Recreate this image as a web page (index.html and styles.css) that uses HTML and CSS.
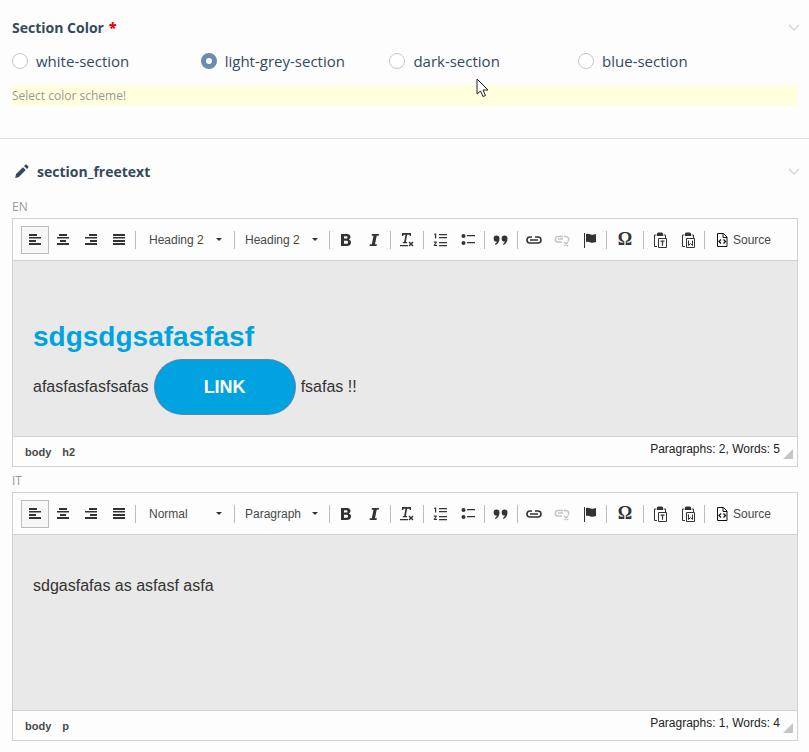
FILE: index.html
```html
<!DOCTYPE html>
<html>
  <head>
    <title>Section editor</title>
    <link rel="stylesheet" href="styles.css">
  </head>
  <body>
    <!-- shared toolbar icons -->
    <svg class="sprites" width="0" height="0">
      <symbol id="i-left" viewBox="0 0 16 16"><path d="M2 2h8v2H2zM2 5h12v1.500H2zM2 8h7v2H2zM2 11h12v2H2z"/></symbol>
      <symbol id="i-center" viewBox="0 0 16 16"><path d="M4 2h8v2H4zM2 5h12v1.500H2zM5 8h6v2H5zM2 11h12v2H2z"/></symbol>
      <symbol id="i-right" viewBox="0 0 16 16"><path d="M6 2h8v2H6zM2 5h12v1.500H2zM7 8h7v2H7zM2 11h12v2H2z"/></symbol>
      <symbol id="i-justify" viewBox="0 0 16 16"><path d="M2 2h12v2H2zM2 5h12v1.500H2zM2 8h12v2H2zM2 11h12v2H2z"/></symbol>
      <symbol id="i-bold" viewBox="0 0 16 16"><path fill-rule="evenodd" d="M3 2h5.500c2.500 0 4 1 4 3 0 1.200-.7 2-1.700 2.500 1.300.4 2.200 1.400 2.200 2.900 0 2.300-1.800 3.600-4.500 3.600H3zm3 2.200v2.400h2c1 0 1.500-.4 1.500-1.200S9 4.200 8 4.200zm0 4.500v3.100h2.300c1.100 0 1.700-.5 1.700-1.600s-.6-1.500-1.700-1.500z"/></symbol>
      <symbol id="i-italic" viewBox="0 0 16 16"><path d="M6 2h7l-.4 1.800h-1.900L9 12.200h1.900l-.4 1.800h-7l.4-1.800h1.900l1.700-8.400H5.600z"/></symbol>
      <symbol id="i-clear" viewBox="0 0 16 16"><path d="M3 1h9v3h-1.200l-.3-1.300H8.200L6.800 10h1.300v1.300H3.800V10h1.300l1.400-7.300H4.700L4.200 4H3zM1 13h8v1.200H1zM10.500 9.500l1.500 1.500 1.500-1.500 1 1-1.500 1.500 1.500 1.500-1 1-1.500-1.500-1.500 1.500-1-1 1.500-1.500-1.500-1.500z"/></symbol>
      <symbol id="i-ol" viewBox="0 0 16 16"><path d="M7 2h8v1.300H7zM7 5h8v1.300H7zM7 10h8v1.300H7zM7 13h8v1.300H7zM3 1.500h1.200v5H3V2.800H2v-.7zM1.800 9.500h3v1.100L3.200 12.800h1.800V14H1.800v-1l1.700-2.300H1.800z"/></symbol>
      <symbol id="i-ul" viewBox="0 0 16 16"><circle cx="3.500" cy="4" r="2"/><circle cx="3.500" cy="11" r="2"/><path d="M7 3h8v1.300H7zM7 10h8v1.300H7z"/></symbol>
      <symbol id="i-quote" viewBox="0 0 16 16"><path d="M3.500 3.500a3 3 0 0 1 3 3c0 3-1.500 5.500-4 6.500l-.6-1c1-.6 1.700-1.500 1.900-2.500a3 3 0 0 1-.3-6zM11.500 3.500a3 3 0 0 1 3 3c0 3-1.500 5.500-4 6.500l-.6-1c1-.6 1.700-1.500 1.900-2.500a3 3 0 0 1-.3-6z"/></symbol>
      <symbol id="i-link" viewBox="0 0 16 16"><path fill="none" stroke="currentColor" stroke-width="1.600" d="M6 5H4a3 3 0 0 0 0 6h8a3 3 0 0 0 0-6H9M4 8h8"/></symbol>
      <symbol id="i-unlink" viewBox="0 0 16 16"><path fill="none" stroke="currentColor" stroke-width="1.500" d="M9 4.500H4a2.700 2.700 0 0 0 0 5.500h4M10 4.500h2a2.700 2.700 0 0 1 2 4.500M4 7h5M10 10l4 4M14 10l-4 4"/></symbol>
      <symbol id="i-flag" viewBox="0 0 16 16"><path d="M2 1h1v15H2zM4 2c3-1 4 .8 6.500.8 1.300 0 2.500-.3 3.500-.8v8c-1 .6-2.200.8-3.500.8C8 10.800 7 9 4 10z"/></symbol>
      <symbol id="i-paste-t" viewBox="0 0 16 16"><path fill="none" stroke="currentColor" d="M4.500 3H2.500v11.500H5M11.500 3h2v3"/><path d="M5 1.500a1.500 1.500 0 0 1 1.500-1h3a1.500 1.500 0 0 1 1.500 1V4H5z"/><path fill="none" stroke="currentColor" d="M6.500 6.500h8v9h-8z"/><path d="M8.500 8.500h4v1.200h-1.400v4H9.900v-4H8.500z"/></symbol>
      <symbol id="i-paste-w" viewBox="0 0 16 16"><path fill="none" stroke="currentColor" d="M4.500 3H2.500v11.500H5M11.500 3h2v3"/><path d="M5 1.500a1.500 1.500 0 0 1 1.500-1h3a1.500 1.500 0 0 1 1.500 1V4H5z"/><path fill="none" stroke="currentColor" d="M6.500 6.500h8v9h-8z"/><path fill="none" stroke="currentColor" d="M8.500 8.500v5l2-2 2 2v-5"/></symbol>
      <symbol id="i-source" viewBox="0 0 16 16"><path fill="none" stroke="#111" d="M3.500 1.500h6l3.500 3.500v9.500H3.500z"/><path d="M9 1.500V5.500h4" fill="none" stroke="#111"/><path fill="none" stroke="#111" stroke-width="1.300" d="M7 7.500 5 9.500l2 2M9.500 7.500l2 2-2 2"/></symbol>
    </svg>

    <!-- Section color -->
    <section class="section color-section">
      <div class="section-head">
        <span class="section-title">Section Color <b class="required">*</b></span>
        <svg class="chevron" width="12" height="7" viewBox="0 0 12 7"><path d="M1 1l5 5 5-5" fill="none" stroke="#c9cfdb" stroke-width="1.200"/></svg>
      </div>
      <div class="radio-row">
        <label class="radio-item"><span class="radio"></span>white-section</label>
        <label class="radio-item"><span class="radio checked"></span>light-grey-section</label>
        <label class="radio-item"><span class="radio"></span>dark-section</label>
        <label class="radio-item"><span class="radio"></span>blue-section</label>
      </div>
      <div class="hint">Select color scheme!</div>
    </section>

    <!-- Free text -->
    <section class="section">
      <div class="section-head freetext-head">
        <span class="section-title">
          <svg class="pencil" width="14" height="14" viewBox="0 0 14 14"><path d="M10.300.8a1 1 0 0 1 1.400 0l1.500 1.500a1 1 0 0 1 0 1.400l-1.300 1.300-2.900-2.900zM7.900 3.200l2.900 2.900-6.900 6.900-3.700.9.900-3.800z" fill="#34495e"/></svg>
          section_freetext
        </span>
        <svg class="chevron" width="12" height="7" viewBox="0 0 12 7"><path d="M1 1l5 5 5-5" fill="none" stroke="#c9cfdb" stroke-width="1.200"/></svg>
      </div>

      <div class="lang">EN</div>
      <div class="editor">
        <div class="toolbar">
          <span class="btn on"><svg><use href="#i-left"/></svg></span>
          <span class="btn"><svg><use href="#i-center"/></svg></span>
          <span class="btn"><svg><use href="#i-right"/></svg></span>
          <span class="btn"><svg><use href="#i-justify"/></svg></span>
          <span class="sep"></span>
          <span class="combo combo-first">Heading 2<i class="caret"></i></span>
          <span class="sep"></span>
          <span class="combo combo-second">Heading 2<i class="caret"></i></span>
          <span class="sep"></span>
          <span class="btn"><svg><use href="#i-bold"/></svg></span>
          <span class="btn"><svg><use href="#i-italic"/></svg></span>
          <span class="sep"></span>
          <span class="btn"><svg><use href="#i-clear"/></svg></span>
          <span class="sep"></span>
          <span class="btn"><svg><use href="#i-ol"/></svg></span>
          <span class="btn"><svg><use href="#i-ul"/></svg></span>
          <span class="sep"></span>
          <span class="btn"><svg><use href="#i-quote"/></svg></span>
          <span class="sep"></span>
          <span class="btn"><svg><use href="#i-link"/></svg></span>
          <span class="btn off"><svg><use href="#i-unlink"/></svg></span>
          <span class="btn"><svg><use href="#i-flag"/></svg></span>
          <span class="sep"></span>
          <span class="btn omega">Ω</span>
          <span class="sep"></span>
          <span class="btn"><svg><use href="#i-paste-t"/></svg></span>
          <span class="btn"><svg><use href="#i-paste-w"/></svg></span>
          <span class="sep"></span>
          <span class="source"><svg><use href="#i-source"/></svg>Source</span>
        </div>
        <div class="content">
          <h2>sdgsdgsafasfasf</h2>
          <p>afasfasfasfsafas <a class="link-btn">LINK</a> fsafas !!</p>
        </div>
        <div class="statusbar">
          <span class="path"><b>body</b><b>h2</b></span>
          <span class="count">Paragraphs: 2, Words: 5</span>
          <i class="grip"></i>
        </div>
      </div>

      <div class="lang">IT</div>
      <div class="editor">
        <div class="toolbar">
          <span class="btn on"><svg><use href="#i-left"/></svg></span>
          <span class="btn"><svg><use href="#i-center"/></svg></span>
          <span class="btn"><svg><use href="#i-right"/></svg></span>
          <span class="btn"><svg><use href="#i-justify"/></svg></span>
          <span class="sep"></span>
          <span class="combo combo-first">Normal<i class="caret"></i></span>
          <span class="sep"></span>
          <span class="combo combo-second">Paragraph<i class="caret"></i></span>
          <span class="sep"></span>
          <span class="btn"><svg><use href="#i-bold"/></svg></span>
          <span class="btn"><svg><use href="#i-italic"/></svg></span>
          <span class="sep"></span>
          <span class="btn"><svg><use href="#i-clear"/></svg></span>
          <span class="sep"></span>
          <span class="btn"><svg><use href="#i-ol"/></svg></span>
          <span class="btn"><svg><use href="#i-ul"/></svg></span>
          <span class="sep"></span>
          <span class="btn"><svg><use href="#i-quote"/></svg></span>
          <span class="sep"></span>
          <span class="btn"><svg><use href="#i-link"/></svg></span>
          <span class="btn off"><svg><use href="#i-unlink"/></svg></span>
          <span class="btn"><svg><use href="#i-flag"/></svg></span>
          <span class="sep"></span>
          <span class="btn omega">Ω</span>
          <span class="sep"></span>
          <span class="btn"><svg><use href="#i-paste-t"/></svg></span>
          <span class="btn"><svg><use href="#i-paste-w"/></svg></span>
          <span class="sep"></span>
          <span class="source"><svg><use href="#i-source"/></svg>Source</span>
        </div>
        <div class="content">
          <p class="plain">sdgasfafas as asfasf asfa</p>
        </div>
        <div class="statusbar">
          <span class="path"><b>body</b><b>p</b></span>
          <span class="count">Paragraphs: 1, Words: 4</span>
          <i class="grip"></i>
        </div>
      </div>
    </section>

    <!-- Mouse pointer -->
    <svg class="pointer" width="14" height="20" viewBox="0 0 14 20"><path d="M1 1v15l3.500-3 2.500 5.500 2.500-1-2.500-5.500h5z" fill="#fff" stroke="#222"/></svg>
  </body>
</html>
```

FILE: styles.css
```css
body {
  margin: 0;
  position: relative;
  background-color: #fdfdfd;
  font-family: "Open Sans", sans-serif;
  color: #34495e;
  overflow: hidden;
}

.sprites {
  display: block;
}

.section {
  padding: 0 11px 0 12px;
}

.color-section {
  padding-top: 17px;
  height: 121px;
  border-bottom: 1px solid #d6e2ee;
}

.section-head {
  display: flex;
  justify-content: space-between;
  align-items: center;
  height: 20px;
  padding-right: 0;
}

.section-title {
  font-size: 14px;
  font-weight: 700;
  display: flex;
  align-items: center;
  gap: 5px;
}

.required {
  color: #e00;
}

.chevron {
  margin-right: -2px;
}

.pencil {
  margin: 0 3px 0 3px;
}

/* Radios */
.radio-row {
  display: grid;
  grid-template-columns: repeat(4, 188.7px);
  margin-top: 14px;
}

.radio-item {
  display: flex;
  align-items: center;
  gap: 8px;
  font-size: 15px;
  height: 20px;
}

.radio {
  width: 14px;
  height: 14px;
  border: 1px solid #c8c8c8;
  border-radius: 50%;
  background-color: #fff;
}

.radio.checked {
  width: 6px;
  height: 6px;
  border: 5px solid #6b8bb0;
}

.hint {
  margin-top: 14px;
  height: 21px;
  line-height: 21px;
  background-color: #ffffdd;
  color: #999;
  font-size: 12px;
}

.freetext-head {
  margin-top: 22px;
}

.lang {
  margin-top: 17px;
  height: 18px;
  line-height: 18px;
  font-size: 12px;
  color: #999;
}

.lang + .editor {
  margin-top: 2px;
}

.editor + .lang {
  margin-top: 5px;
}

/* Editor */
.editor {
  border: 1px solid #d1d1d1;
  background-color: #fff;
  height: 247px;
  display: flex;
  flex-direction: column;
}

.toolbar {
  display: flex;
  align-items: center;
  height: 41px;
  padding-left: 8px;
  flex-shrink: 0;
  background-color: #fdfdfd;
  border-bottom: 1px solid #d1d1d1;
  font-family: "Liberation Sans", Arial, sans-serif;
  font-size: 12px;
  color: #484848;
}

.btn {
  width: 28px;
  height: 28px;
  box-sizing: border-box;
  display: flex;
  align-items: center;
  justify-content: center;
  color: #333;
  fill: #333;
}

.btn svg,
.source svg {
  width: 16px;
  height: 16px;
}

.btn.on {
  border: 1px solid #bcbcbc;
  background-color: #f7f7f7;
}

.btn.off {
  color: #c4c4c4;
  fill: #c4c4c4;
}

.omega {
  font-family: "Liberation Serif", serif;
  font-size: 18px;
  font-weight: 700;
  width: 32px;
}

.sep {
  width: 1px;
  height: 18px;
  background-color: #bcbcbc;
  margin: 0 2px;
}

.combo {
  display: flex;
  align-items: center;
  justify-content: space-between;
  box-sizing: border-box;
  height: 28px;
}

.combo-first {
  width: 94px;
  padding: 0 10px 0 11px;
}

.combo-second {
  width: 90px;
  padding: 0 9px 0 8px;
}

.caret {
  border: 3px solid transparent;
  border-top: 3px solid #333;
  border-bottom: 0;
}

.source {
  display: flex;
  align-items: center;
  gap: 3px;
  margin-left: 7px;
}

.content {
  flex: 1;
  padding: 0 20px;
  background-color: #e9e9e9;
  font-family: "Liberation Sans", Arial, sans-serif;
  font-size: 16px;
  color: #333;
}

.content h2 {
  margin: 58px 0 0;
  font-size: 28px;
  line-height: 36px;
  color: #00a3e0;
}

.content p {
  margin: 4px 0 0;
  display: flex;
  align-items: center;
  gap: 5px;
}

.content p.plain {
  margin-top: 42px;
}

.link-btn {
  width: 142px;
  height: 56px;
  box-sizing: border-box;
  display: flex;
  align-items: center;
  justify-content: center;
  border: 1px dotted #d0606a;
  border-radius: 28px;
  background-color: #00a3e0;
  color: #fff;
  font-size: 18px;
  font-weight: 700;
}

.statusbar {
  display: flex;
  justify-content: space-between;
  position: relative;
  height: 29px;
  flex-shrink: 0;
  padding: 0 17px 0 12px;
  border-top: 1px solid #d1d1d1;
  background-color: #fdfdfd;
  font-family: "Liberation Sans", Arial, sans-serif;
  font-size: 12px;
  color: #222;
}

.path {
  display: flex;
  gap: 11px;
  align-items: center;
  font-size: 11px;
  color: #484848;
}

.count {
  line-height: 24px;
}

.grip {
  position: absolute;
  right: 4px;
  bottom: 7px;
  width: 0;
  height: 0;
  border-style: solid;
  border-width: 0 0 10px 10px;
  border-color: transparent transparent #c6c6c6 transparent;
}

.pointer {
  position: absolute;
  left: 476px;
  top: 78px;
}
```
